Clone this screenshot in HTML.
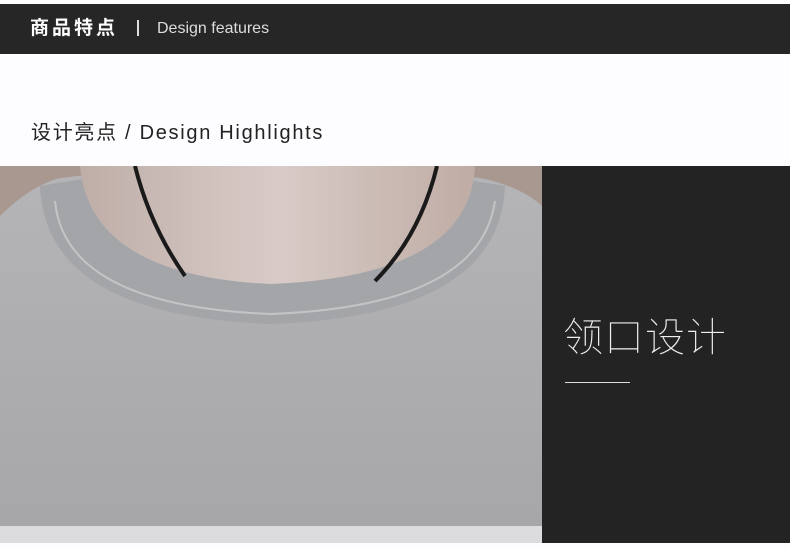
<!DOCTYPE html>
<html><head><meta charset="utf-8"><style>
html,body{margin:0;padding:0;}
body{width:790px;height:549px;background:#fdfdff;position:relative;overflow:hidden;font-family:"Liberation Sans","Noto Sans CJK SC",sans-serif;}
.bar{position:absolute;left:0;top:4px;width:790px;height:50px;background:#262626;}
.t1{position:absolute;left:30px;top:16px;color:#fff;font-size:19px;font-weight:bold;letter-spacing:3px;line-height:26px;}
.sep{position:absolute;left:137px;top:20px;width:2px;height:16px;background:#ddd;}
.t2{position:absolute;left:157px;top:19px;color:#ddd;font-size:16px;line-height:19px;}
.h{position:absolute;left:31px;top:121px;color:#222;font-size:20px;letter-spacing:1.7px;line-height:24px;}
.panel{position:absolute;left:542px;top:166px;width:248px;height:377px;background:#232323;}
.big{position:absolute;left:563px;top:305px;color:#eee;font-size:40px;font-weight:100;font-family:"Noto Sans CJK SC",sans-serif;letter-spacing:1px;}
.line{position:absolute;left:565px;top:382px;width:65px;height:1px;background:#ddd;}
svg{position:absolute;left:0;top:166px;}
</style></head><body>
<div class="bar"></div>
<div class="t1">商品特点</div><div class="sep"></div><div class="t2">Design features</div>
<div class="h">设计亮点 / Design Highlights</div>
<svg width="542" height="377" viewBox="0 0 542 377">
<defs><linearGradient id="sk" x1="0" y1="0" x2="1" y2="0"><stop offset="0" stop-color="#bfaea8"/><stop offset=".5" stop-color="#d8cbc7"/><stop offset="1" stop-color="#bfaca4"/></linearGradient>
<linearGradient id="sw" x1="0" y1="0" x2="0" y2="1"><stop offset="0" stop-color="#b5b5b7"/><stop offset="1" stop-color="#a6a6a8"/></linearGradient></defs>
<rect width="542" height="377" fill="#a9a9ab"/>
<path d="M0 0H542V60Q300 -10 0 50Z" fill="#a89890"/>
<path d="M0 50Q30 20 60 12 Q271 -15 480 12 Q520 20 542 40 V377H0Z" fill="url(#sw)"/>
<rect x="0" y="360" width="542" height="17" fill="#dcdcde"/>
<path d="M40 20 Q271 -20 505 20 Q500 150 271 158 Q45 150 40 20Z" fill="#a4a5a9"/>
<path d="M80 0 H475 Q470 110 271 118 Q90 110 80 0Z" fill="url(#sk)"/>
<path d="M135 0 Q150 60 185 110" stroke="#1a1a1a" stroke-width="4" fill="none"/>
<path d="M437 0 Q420 70 375 115" stroke="#1a1a1a" stroke-width="4" fill="none"/>
<path d="M55 35 Q65 140 271 148 Q480 140 495 35" stroke="#c4c4c6" stroke-width="2" fill="none"/>
</svg>
<div class="panel"></div>
<div class="big">领口设计</div>
<div class="line"></div>
</body></html>
